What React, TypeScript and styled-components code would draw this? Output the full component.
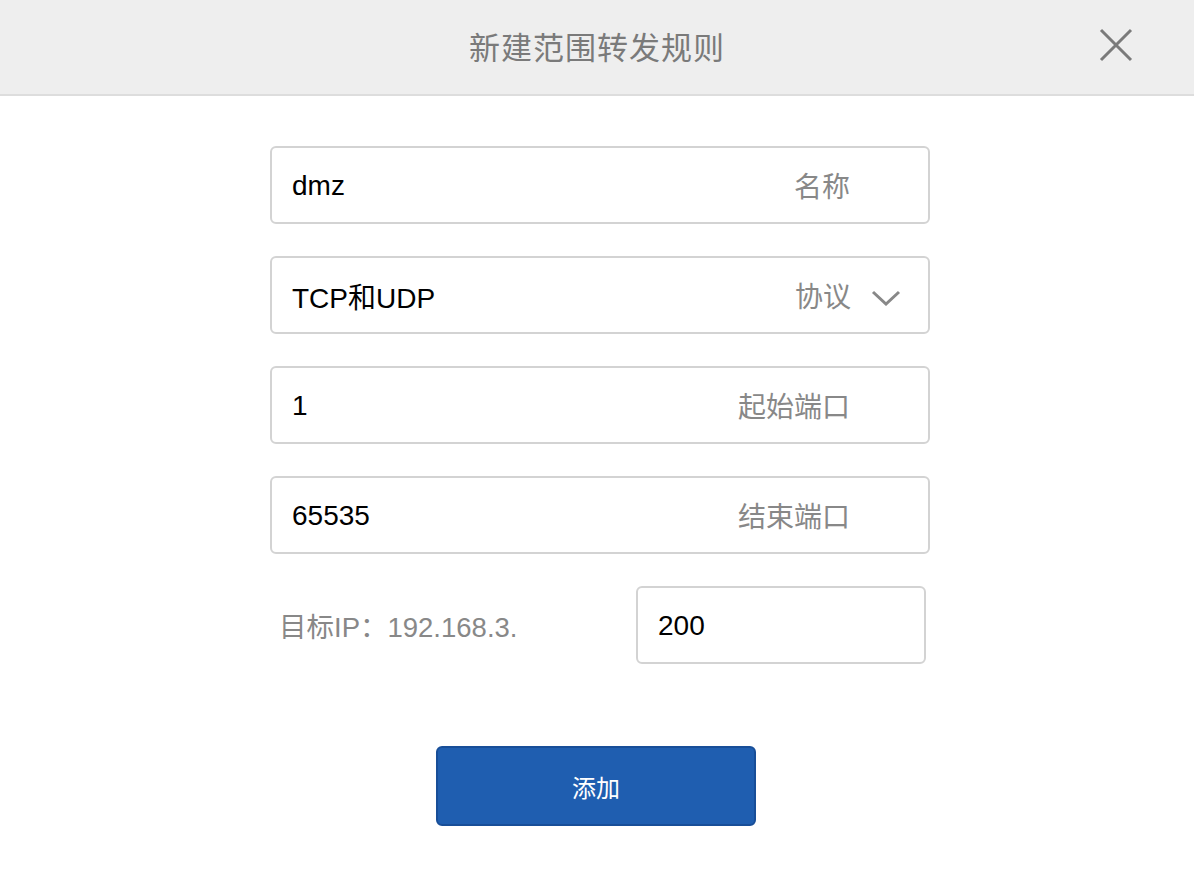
import React from "react";
import styled, { createGlobalStyle } from "styled-components";

const Global = createGlobalStyle`
  html, body { margin: 0; padding: 0; background: #ffffff; }
  body { font-family: "Liberation Sans", "Noto Sans CJK SC", sans-serif; }
  * { box-sizing: border-box; }
`;

const Page = styled.div`
  width: 1194px;
  height: 884px;
  background: #ffffff;
  display: flex;
  flex-direction: column;
`;

const Header = styled.header`
  height: 96px;
  background: #eeeeee;
  border-bottom: 2px solid #dddddd;
  display: flex;
  align-items: center;
  justify-content: center;
  position: relative;
`;

const Title = styled.h1`
  margin: 0;
  font-size: 31px;
  font-weight: 400;
  color: #7a7a7a;
  letter-spacing: 1px;
  padding-bottom: 4px;
`;

const Close = styled.button`
  position: absolute;
  right: 59px;
  top: 26px;
  width: 38px;
  height: 38px;
  border: 0;
  background: transparent;
  padding: 0;
  display: flex;
  align-items: center;
  justify-content: center;
  cursor: pointer;
`;

const Form = styled.form`
  width: 660px;
  margin: 50px 0 0 270px;
  display: flex;
  flex-direction: column;
  gap: 32px;
`;

const Field = styled.div<{ $width?: number }>`
  width: ${(p) => p.$width ?? 660}px;
  height: 78px;
  border: 2px solid #d3d3d3;
  border-radius: 6px;
  display: flex;
  align-items: center;
  padding: 0 0 0 20px;
  background: #fff;
`;

const Value = styled.span`
  flex: 1;
  font-size: 28px;
  color: #000;
  padding-top: 2px;
`;

const Label = styled.span<{ $pr: number }>`
  font-size: 28px;
  color: #888888;
  padding-right: ${(p) => p.$pr}px;
`;

const Chevron = styled.span`
  display: flex;
  align-items: center;
  padding: 6px 27px 0 20px;
`;

const IpRow = styled.div`
  display: flex;
  align-items: center;
  justify-content: space-between;
  padding: 0 4px 0 9px;
`;

const IpLabel = styled.span`
  font-size: 27.5px;
  color: #888888;
`;

const ButtonRow = styled.div`
  display: flex;
  justify-content: flex-start;
  padding-left: 166px;
  margin-top: 50px;
`;

const AddButton = styled.button`
  width: 320px;
  height: 80px;
  background: #1f5eb0;
  border: 2px solid #184e98;
  border-radius: 6px;
  color: #ffffff;
  font-size: 24px;
  font-family: "Liberation Sans", "Noto Sans CJK SC", sans-serif;
  cursor: pointer;
`;

export default function App() {
  return (
    <Page>
      <Global />
      <Header>
        <Title>新建范围转发规则</Title>
        <Close aria-label="关闭">
          <svg width="34" height="34" viewBox="0 0 34 34">
            <path d="M2 2 L32 32 M32 2 L2 32" stroke="#7a7a7a" strokeWidth="3" fill="none" />
          </svg>
        </Close>
      </Header>
      <Form>
        <Field>
          <Value>dmz</Value>
          <Label $pr={78}>名称</Label>
        </Field>
        <Field>
          <Value>TCP和UDP</Value>
          <Label $pr={0}>协议</Label>
          <Chevron>
            <svg width="30" height="16" viewBox="0 0 30 16">
              <path d="M2 2 L15 14 L28 2" stroke="#888888" strokeWidth="3" fill="none" />
            </svg>
          </Chevron>
        </Field>
        <Field>
          <Value>1</Value>
          <Label $pr={78}>起始端口</Label>
        </Field>
        <Field>
          <Value>65535</Value>
          <Label $pr={78}>结束端口</Label>
        </Field>
        <IpRow>
          <IpLabel>目标IP：192.168.3.</IpLabel>
          <Field $width={290}>
            <Value>200</Value>
          </Field>
        </IpRow>
        <ButtonRow>
          <AddButton type="button">添加</AddButton>
        </ButtonRow>
      </Form>
    </Page>
  );
}
